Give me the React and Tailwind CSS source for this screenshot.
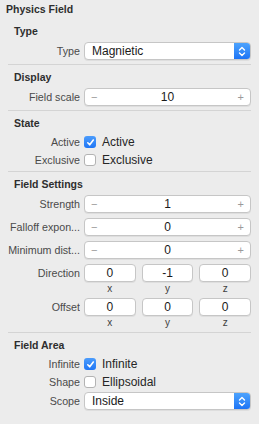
import React from "react";

function Header({ children }) {
  return (
    <div className="h-[13px] leading-[13px] pl-[14px] text-[10.5px] font-bold text-[#2e2e2e]">
      {children}
    </div>
  );
}

function Separator() {
  return <div className="h-px bg-[#d4d4d4] ml-[8px] mr-[8px]" />;
}

function Row({ label, children, className = "" }) {
  return (
    <div className={`flex items-center pr-[8px] ${className}`}>
      <div className="w-[80px] shrink-0 text-right text-[10.7px] text-[#4a4a4a] whitespace-nowrap overflow-hidden">
        {label}
      </div>
      <div className="ml-[4px] flex-1 min-w-0">{children}</div>
    </div>
  );
}

function Popup({ value }) {
  return (
    <div className="flex h-[18px] rounded-[4px] border border-[#c6c6c6] bg-white shadow-[0_1px_0_rgba(0,0,0,0.06)] overflow-hidden">
      <div className="flex-1 pl-[7px] leading-[16px] text-[12px] text-[#1a1a1a]">{value}</div>
      <div className="w-[16px] h-full bg-gradient-to-b from-[#4da3fd] to-[#1d74f5] flex items-center justify-center">
        <svg width="8" height="11" viewBox="0 0 8 11" fill="none" stroke="white" strokeWidth="1.4" strokeLinecap="round" strokeLinejoin="round">
          <path d="M1.5 4 L4 1.5 L6.5 4" />
          <path d="M1.5 7 L4 9.5 L6.5 7" />
        </svg>
      </div>
    </div>
  );
}

function Stepper({ value }) {
  return (
    <div className="relative flex items-center h-[18px] rounded-[4px] border border-[#c6c6c6] bg-white shadow-[0_1px_0_rgba(0,0,0,0.06)]">
      <span className="absolute left-[6px] top-0 leading-[16px] text-[11px] text-[#9a9a9a]">−</span>
      <span className="flex-1 text-center leading-[16px] text-[12px] text-[#1a1a1a]">{value}</span>
      <span className="absolute right-[6px] top-0 leading-[16px] text-[11px] text-[#9a9a9a]">+</span>
    </div>
  );
}

function Vector({ values }) {
  return (
    <div className="grid grid-cols-3 gap-[6px]">
      {values.map((v, i) => (
        <div
          key={i}
          className="h-[18px] rounded-[4px] border border-[#c6c6c6] bg-white text-center leading-[16px] text-[12px] text-[#1a1a1a] shadow-[0_1px_0_rgba(0,0,0,0.06)]"
        >
          {v}
        </div>
      ))}
    </div>
  );
}

function AxisLabels() {
  return (
    <div className="flex pr-[8px]">
      <div className="w-[84px] shrink-0" />
      <div className="flex-1 grid grid-cols-3 gap-[6px] h-[13px] leading-[13px] text-[10px] text-[#404040] text-center">
        <span>x</span>
        <span>y</span>
        <span>z</span>
      </div>
    </div>
  );
}

function Checkbox({ checked, label }) {
  return (
    <div className="flex items-center h-[18px]">
      {checked ? (
        <div className="w-[12px] h-[12px] rounded-[3px] bg-gradient-to-b from-[#4b9cfc] to-[#1f76f5] flex items-center justify-center">
          <svg width="9" height="9" viewBox="0 0 9 9" fill="none" stroke="white" strokeWidth="1.6" strokeLinecap="round" strokeLinejoin="round">
            <path d="M1.8 4.8 L3.7 6.8 L7.3 2" />
          </svg>
        </div>
      ) : (
        <div className="w-[12px] h-[12px] rounded-[3px] border border-[#b3b3b3] bg-white" />
      )}
      <span className="ml-[6px] text-[12px] text-[#262626]">{label}</span>
    </div>
  );
}

export default function App() {
  return (
    <div className="w-[259px] h-[424px] bg-[#ececec] font-['Liberation_Sans',Arial,sans-serif] overflow-hidden">
      <div className="pt-[3px] pl-[6px] h-[16px] leading-[13px] text-[10.5px] font-bold text-[#2e2e2e]">
        Physics Field
      </div>

      {/* Type */}
      <div className="mt-[9px]">
        <Header>Type</Header>
        <Row label="Type" className="mt-[4px]">
          <Popup value="Magnietic" />
        </Row>
      </div>
      <div className="mt-[4px]">
        <Separator />
      </div>

      {/* Display */}
      <div className="pt-[6px]">
        <Header>Display</Header>
        <Row label="Field scale" className="mt-[4px]">
          <Stepper value="10" />
        </Row>
      </div>
      <div className="mt-[4px]">
        <Separator />
      </div>

      {/* State */}
      <div className="pt-[6px]">
        <Header>State</Header>
        <div className="mt-[3px]">
          <Row label="Active">
            <Checkbox checked label="Active" />
          </Row>
          <Row label="Exclusive">
            <Checkbox label="Exclusive" />
          </Row>
        </div>
      </div>
      <div className="mt-[2px]">
        <Separator />
      </div>

      {/* Field Settings */}
      <div className="pt-[6px]">
        <Header>Field Settings</Header>
        <div className="mt-[4px] flex flex-col gap-[5px]">
          <Row label="Strength">
            <Stepper value="1" />
          </Row>
          <Row label="Falloff expon...">
            <Stepper value="0" />
          </Row>
          <Row label="Minimum dist...">
            <Stepper value="0" />
          </Row>
          <Row label="Direction">
            <Vector values={["0", "-1", "0"]} />
          </Row>
        </div>
        <AxisLabels />
        <Row label="Offset" className="mt-[3px]">
          <Vector values={["0", "0", "0"]} />
        </Row>
        <AxisLabels />
      </div>
      <div className="mt-[3px]">
        <Separator />
      </div>

      {/* Field Area */}
      <div className="pt-[6px]">
        <Header>Field Area</Header>
        <div className="mt-[3px]">
          <Row label="Infinite">
            <Checkbox checked label="Infinite" />
          </Row>
          <Row label="Shape">
            <Checkbox label="Ellipsoidal" />
          </Row>
        </div>
        <Row label="Scope" className="mt-[1px]">
          <Popup value="Inside" />
        </Row>
      </div>
    </div>
  );
}
